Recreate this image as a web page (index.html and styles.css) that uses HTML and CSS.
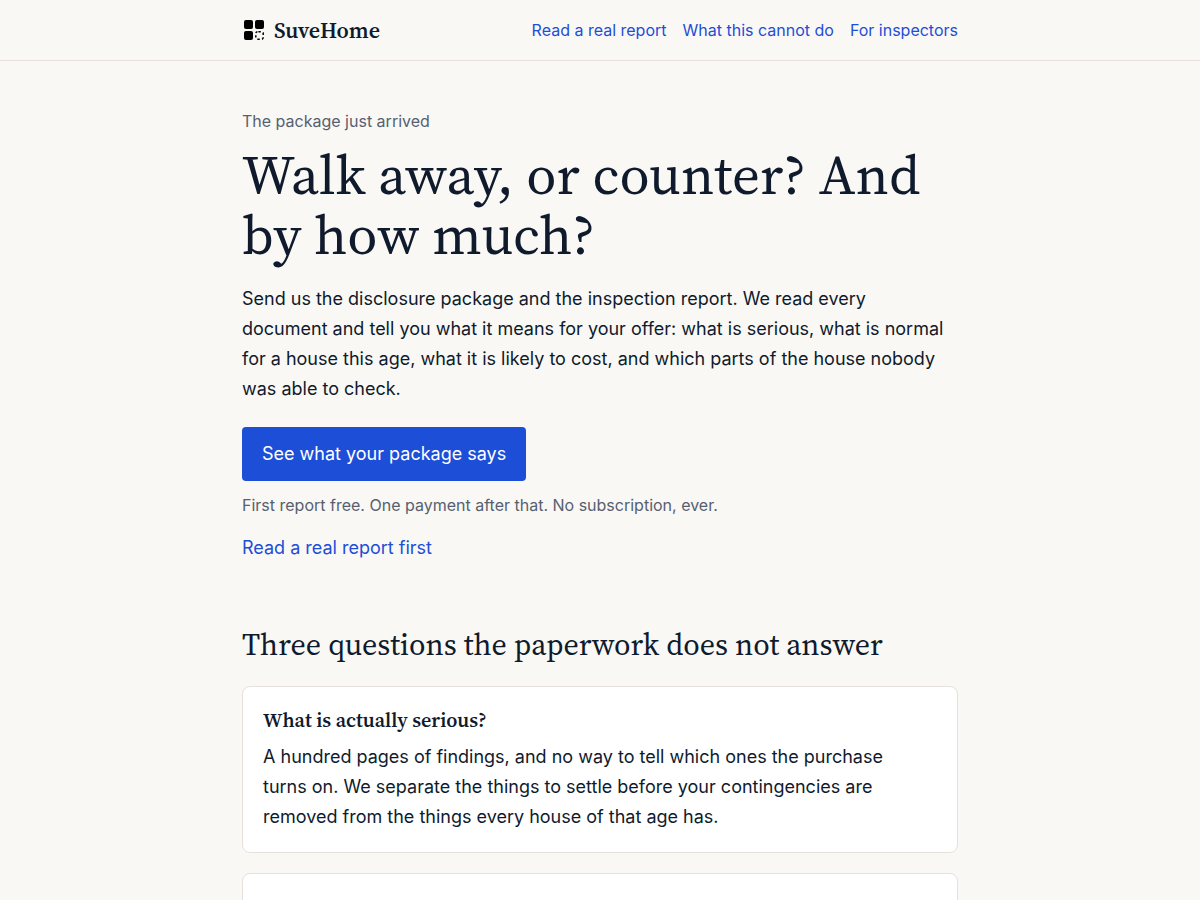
FILE: index.html
```html
<!DOCTYPE html>
<html lang="en">
<head>
<meta charset="utf-8">
<meta name="viewport" content="width=device-width, initial-scale=1">
<title>SuveHome</title>
<link rel="stylesheet" href="styles.css">
</head>
<body>
<header class="site-header">
  <div class="wrap bar">
    <a class="brand" href="#">
      <svg class="mark" viewBox="0 0 24 24" aria-hidden="true">
        <rect x="2" y="2" width="9" height="9" rx="2"/>
        <rect x="13" y="2" width="9" height="9" rx="2"/>
        <rect x="2" y="13" width="9" height="9" rx="2"/>
        <rect x="13.8" y="13.8" width="7.4" height="7.4" rx="1.6" fill="none" stroke="#000" stroke-width="1.5" stroke-dasharray="2.4 2.2" stroke-dashoffset="-1"/>
      </svg>
      <span>SuveHome</span>
    </a>
    <nav class="links">
      <a href="#">Read a real report</a>
      <a href="#">What this cannot do</a>
      <a href="#">For inspectors</a>
    </nav>
  </div>
</header>
<main class="wrap">
  <section class="hero">
    <p class="small">The package just arrived</p>
    <h1>Walk away, or counter? And by how much?</h1>
    <p class="lead">Send us the disclosure package and the inspection report. We read every document and tell you what it means for your offer: what is serious, what is normal for a house this age, what it is likely to cost, and which parts of the house nobody was able to check.</p>
    <button class="cta" type="button">See what your package says</button>
    <p class="small note">First report free. One payment after that. No subscription, ever.</p>
    <a class="more" href="#">Read a real report first</a>
  </section>
  <section class="questions">
    <h2>Three questions the paperwork does not answer</h2>
    <article class="card">
      <h3>What is actually serious?</h3>
      <p>A hundred pages of findings, and no way to tell which ones the purchase turns on. We separate the things to settle before your contingencies are removed from the things every house of that age has.</p>
    </article>
    <article class="card"></article>
  </section>
</main>
</body>
</html>
```
FILE: styles.css
```css
* { box-sizing: border-box; }
body {
  margin: 0;
  background: #faf8f4;
  color: #0f1b2d;
  font: 18px/30px Inter, sans-serif;
}
h1, h2, h3, p { margin: 0; }
h1, h2, h3, .brand {
  font-family: "Source Serif 4", "Liberation Serif", serif;
}
a { color: #1d4ed8; text-decoration: none; }
.wrap {
  max-width: 756px;
  margin: 0 auto;
  padding: 0 20px;
}
.site-header { border-bottom: 1px solid #e7e0dc; }
.bar {
  display: flex;
  align-items: center;
  justify-content: space-between;
  flex-wrap: wrap;
  min-height: 60px;
}
.brand {
  display: flex;
  align-items: center;
  gap: 8px;
  color: #0f1b2d;
  font-size: 22px;
  font-weight: 600;
}
.mark { width: 24px; height: 24px; }
.links {
  display: flex;
  flex-wrap: wrap;
  gap: 0 16px;
  font-size: 16px;
}
.hero {
  display: flex;
  flex-direction: column;
  align-items: flex-start;
  padding: 48px 0 64px;
}
.small {
  color: #566070;
  font-size: 16px;
  line-height: 24px;
}
h1 {
  margin-top: 12px;
  font-size: 55px;
  font-weight: 400;
  line-height: 60px;
}
.lead {
  max-width: 708px;
  margin-top: 19px;
}
.cta {
  margin-top: 23px;
  padding: 12px 20px;
  border: 0;
  border-radius: 4px;
  background: #1d4ed8;
  color: #fff;
  font: inherit;
  cursor: pointer;
}
.note { margin-top: 12px; }
.more { margin-top: 16px; }
h2 {
  margin-bottom: 24px;
  font-size: 30px;
  font-weight: 400;
  line-height: 35px;
}
.card {
  min-height: 160px;
  margin-bottom: 20px;
  padding: 20px;
  border: 1px solid #e7e0dc;
  border-radius: 8px;
  background: #fff;
}
.card p { max-width: 640px; }
h3 {
  margin-bottom: 8px;
  font-size: 20px;
  font-weight: 600;
  line-height: 27px;
}
```
